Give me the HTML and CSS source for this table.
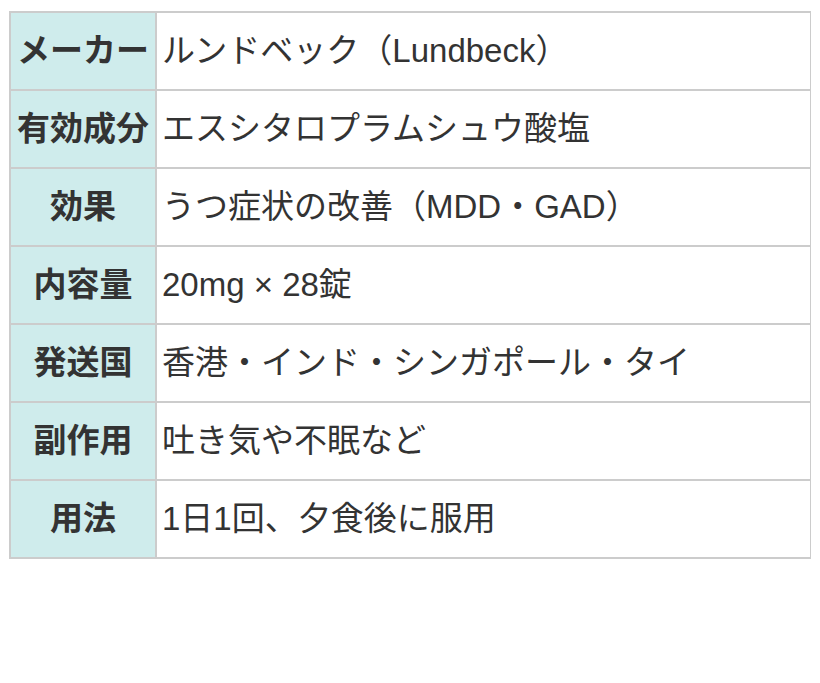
FILE: index.html
```html
<!DOCTYPE html>
<html lang="ja">
<head>
<meta charset="utf-8">
<link rel="stylesheet" href="styles.css">
</head>
<body>
<table class="spec">
<tbody>
<tr><th>メーカー</th><td>ルンドベック（Lundbeck）</td></tr>
<tr><th>有効成分</th><td>エスシタロプラムシュウ酸塩</td></tr>
<tr><th>効果</th><td>うつ症状の改善（MDD・GAD）</td></tr>
<tr><th>内容量</th><td>20mg × 28錠</td></tr>
<tr><th>発送国</th><td>香港・インド・シンガポール・タイ</td></tr>
<tr><th>副作用</th><td>吐き気や不眠など</td></tr>
<tr><th>用法</th><td>1日1回、夕食後に服用</td></tr>
</tbody>
</table>
</body>
</html>
```
FILE: styles.css
```css
html, body {
  background: #fff;
}
body {
  margin: 11px 9px;
  font-family: "Liberation Sans", "Noto Sans CJK JP", sans-serif;
  color: #333;
}
.spec {
  width: 803px;
  border-collapse: collapse;
  font-size: 33px;
  line-height: 48px;
}
.spec th,
.spec td {
  border: 2px solid #cccccc;
  padding: 14px 5px;
}
.spec th {
  padding: 14px 6px;
  background: #cfecec;
  font-weight: bold;
  text-align: center;
  white-space: nowrap;
  width: 1%;
}
.spec td {
  text-align: left;
}
```
